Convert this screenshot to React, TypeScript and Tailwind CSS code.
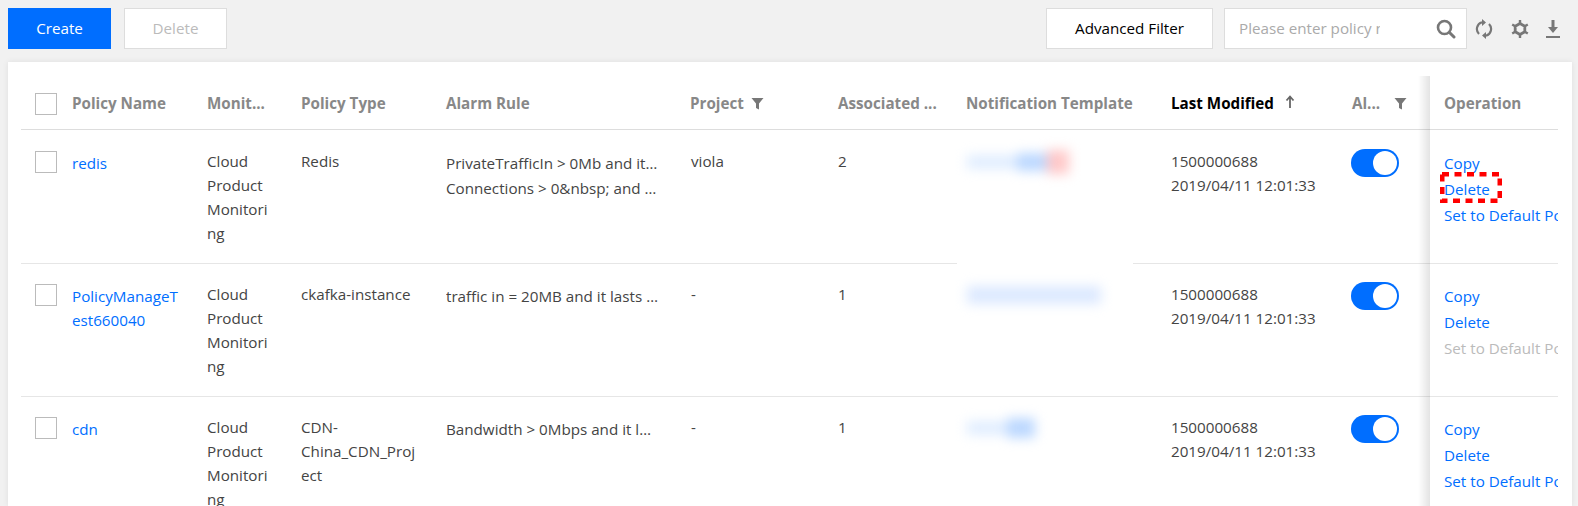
const columns = 'grid grid-cols-[51px_135px_94px_145px_245px_147px_128px_205px_181px_92px_114px]';

function FilterIcon() {
  return (
    <svg width="13" height="13" viewBox="0 0 13 13" className="ml-[7px] shrink-0">
      <path d="M0.5 1h12L8 6.5V12.5L5 11V6.5z" fill="#777" />
    </svg>
  );
}

function Checkbox() {
  return <div className="w-[22px] h-[22px] border border-[#bbb] bg-white" />;
}

function Toggle() {
  return (
    <div className="-ml-[1px] w-[48px] h-[28px] rounded-full bg-[#006eff] flex items-center justify-end pr-[2px]">
      <div className="w-[24px] h-[24px] rounded-full bg-white" />
    </div>
  );
}

function Header() {
  return (
    <div className={`${columns} h-[68px] items-center border-b border-[#ddd] font-bold text-[#888] pt-[16px]`}>
      <div className="pl-[14px]">
        <Checkbox />
      </div>
      <div>Policy Name</div>
      <div>Monit...</div>
      <div>Policy Type</div>
      <div>Alarm Rule</div>
      <div className="flex items-center -ml-[1px]">
        Project
        <FilterIcon />
      </div>
      <div>Associated ...</div>
      <div className="whitespace-nowrap">Notification Template</div>
      <div className="flex items-center text-black">
        Last Modified
        <svg width="12" height="14" viewBox="0 0 12 14" className="ml-[10px] -mt-[3px]">
          <path d="M6 13V2M2.5 5.5 6 1.5l3.5 4" fill="none" stroke="#666" strokeWidth="1.8" />
        </svg>
      </div>
      <div className="flex items-center">
        Al...
        <span className="ml-[7px] flex">
          <FilterIcon />
        </span>
      </div>
      <div>Operation</div>
    </div>
  );
}

type RowData = {
  name: string;
  type: string;
  rules: string[];
  project: string;
  count: string;
  blur: React.ReactNode;
  defaultDisabled?: boolean;
  gap?: boolean;
};

const rows: RowData[] = [
  {
    name: 'redis',
    type: 'Redis',
    rules: ['PrivateTrafficIn > 0Mb and it lasts 1 minute', 'Connections > 0&nbsp; and it lasts 1 minute'],
    project: 'viola',
    count: '2',
    gap: true,
    blur: (
      <div className="flex items-center h-[20px] mt-[3px] ml-[10px] blur-[6px]">
        <div className="w-[50px] h-[14px] bg-[#e0edff]" />
        <div className="w-[30px] h-[18px] bg-[#bcd8ff]" />
        <div className="w-[22px] h-[24px] bg-[#ffc9c9]" />
      </div>
    ),
  },
  {
    name: 'PolicyManageTest660040',
    type: 'ckafka-instance',
    rules: ['traffic in = 20MB and it lasts 1 minute'],
    project: '-',
    count: '1',
    defaultDisabled: true,
    blur: <div className="h-[18px] w-[134px] mt-[4px] ml-[10px] bg-[#dce9ff] blur-[6px]" />,
  },
  {
    name: 'cdn',
    type: 'CDN-China_CDN_Project',
    rules: ['Bandwidth > 0Mbps and it lasts 1 minute'],
    project: '-',
    count: '1',
    blur: (
      <div className="flex items-center h-[20px] mt-[3px] ml-[10px] blur-[6px]">
        <div className="w-[40px] h-[14px] bg-[#e0edff]" />
        <div className="w-[28px] h-[20px] bg-[#bcd8ff]" />
      </div>
    ),
  },
];

function Row({ row }: { row: RowData }) {
  return (
    <div
      className={`${columns} h-[133px] first:h-[134px] border-b border-[#e6e6e6] pt-[18px] first:pt-[19px] leading-[24px] text-[#444] relative`}
    >
      <div className="pl-[14px] pt-[2px]">
        <Checkbox />
      </div>
      <div className="text-[#006eff] break-words w-[110px] pt-[2px]">{row.name}</div>
      <div className="break-words w-[66px]">Cloud Product Monitoring</div>
      <div className="break-words w-[122px]">{row.type}</div>
      <div className="pt-[2px] w-[213px]">
        {row.rules.map((rule) => (
          <div key={rule} className="truncate leading-[25px]">
            {rule}
          </div>
        ))}
      </div>
      <div>{row.project}</div>
      <div>{row.count}</div>
      <div className="relative">
        {row.gap && <div className="absolute left-[-9px] w-[176px] top-[108px] h-[12px] bg-white" />}
        <div className="-ml-[9px]">{row.blur}</div>
      </div>
      <div>
        <div>1500000688</div>
        <div>2019/04/11 12:01:33</div>
      </div>
      <div>
        <Toggle />
      </div>
      <div className="pt-[1px] leading-[26px] text-[#006eff] whitespace-nowrap overflow-hidden">
        <div>Copy</div>
        <div>Delete</div>
        <div className={row.defaultDisabled ? 'text-[#bbb]' : ''}>Set to Default Policy</div>
      </div>
    </div>
  );
}

export default function App() {
  return (
    <div className="h-[506px] w-[1578px] overflow-hidden bg-[#f1f1f1] text-[15.2px] font-['Open_Sans','Noto_Sans',sans-serif]">
      <div className="flex items-center h-[62px] pb-[5px] pl-[8px]">
        <button className="w-[103px] h-[41px] bg-[#006eff] text-white">Create</button>
        <button className="ml-[13px] w-[103px] h-[41px] bg-white border border-[#ddd] text-[#bbb]">Delete</button>
        <button className="ml-[819px] w-[167px] h-[41px] bg-white border border-[#ddd] text-black">
          Advanced Filter
        </button>
        <div className="ml-[11px] w-[243px] h-[41px] bg-white border border-[#ddd] flex items-center pl-[14px] pr-[10px]">
          <span className="w-[141px] overflow-hidden whitespace-nowrap text-[#aaa]">Please enter policy name</span>
          <svg width="20" height="20" viewBox="0 0 20 20" className="ml-auto">
            <circle cx="8.5" cy="8.5" r="6.5" fill="none" stroke="#777" strokeWidth="2.6" />
            <path d="M13.5 13.5 18 18" stroke="#777" strokeWidth="3" strokeLinecap="round" />
          </svg>
        </div>
        <svg width="18" height="20" viewBox="0 0 18 20" className="ml-[8px]">
          <path d="M4 15A7 7 0 0 1 7 3.3M14 5a7 7 0 0 1-3 11.7" fill="none" stroke="#777" strokeWidth="2.2" />
          <path d="M7 0l4 3.5-4 3.5zM11 13l-4 3.5 4 3.5z" fill="#777" />
        </svg>
        <svg width="20" height="20" viewBox="0 0 20 20" className="ml-[17px]">
          <path
            d="M10 4.5 14.8 7.2V12.8L10 15.5 5.2 12.8V7.2z"
            fill="none"
            stroke="#777"
            strokeWidth="2.8"
            strokeLinejoin="round"
          />
          <path d="M10 1v3M10 16v3M2.2 5.5l2.6 1.5M15.2 13l2.6 1.5M2.2 14.5 4.8 13M15.2 7l2.6-1.5" stroke="#777" strokeWidth="2.4" />
        </svg>
        <svg width="16" height="20" viewBox="0 0 16 20" className="ml-[15px]">
          <path d="M8 1v9" stroke="#777" strokeWidth="3" />
          <path d="M3 8h10l-5 6z" fill="#777" />
          <path d="M1 18h14" stroke="#777" strokeWidth="2" />
        </svg>
      </div>
      <div className="relative ml-[8px] w-[1564px] h-[444px] bg-white shadow-[0_0_6px_rgba(0,0,0,0.08)] pl-[13px]">
        <div className="w-[1537px]">
          <Header />
          <div>
            {rows.map((row) => (
              <Row key={row.name} row={row} />
            ))}
          </div>
        </div>
        <div className="absolute left-[1410px] top-[14px] bottom-0 w-[12px] bg-gradient-to-r from-transparent to-[#0000001c]" />
        <svg width="62" height="31" className="absolute left-[1432px] top-[110px]">
          <rect x="2" y="2" width="58" height="27" fill="none" stroke="#f00" strokeWidth="5" strokeDasharray="7 5.5" />
        </svg>
      </div>
    </div>
  );
}
